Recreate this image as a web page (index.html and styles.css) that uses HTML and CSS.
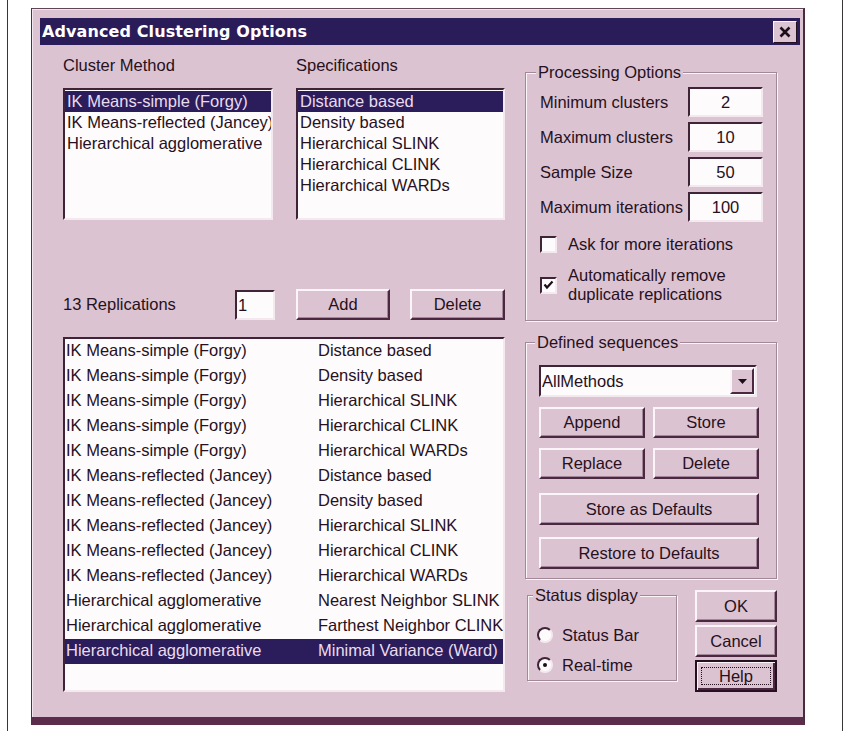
FILE: index.html
```html
<!DOCTYPE html>
<html lang="en">
<head>
<meta charset="utf-8">
<title>Advanced Clustering Options</title>
<link rel="stylesheet" href="styles.css">
</head>
<body>
<div class="page">
  <div class="dialog">
    <div class="titlebar">
      <span class="title">Advanced Clustering Options</span>
      <span class="close" aria-label="Close">
        <svg width="14" height="12" viewBox="0 0 14 12"><path d="M2.5 1.5 L11.5 10.5 M11.5 1.5 L2.5 10.5" stroke="#1c0f19" stroke-width="2.6" fill="none"/></svg>
      </span>
    </div>

    <div class="content">
      <!-- left side: method pickers and the replication list -->
      <div class="left">
        <div class="pickers">
          <div class="picker">
            <div class="label">Cluster Method</div>
            <ul class="list short">
              <li class="sel">IK Means-simple (Forgy)</li>
              <li>IK Means-reflected (Jancey)</li>
              <li>Hierarchical agglomerative</li>
            </ul>
          </div>
          <div class="picker">
            <div class="label">Specifications</div>
            <ul class="list short">
              <li class="sel">Distance based</li>
              <li>Density based</li>
              <li>Hierarchical SLINK</li>
              <li>Hierarchical CLINK</li>
              <li>Hierarchical WARDs</li>
            </ul>
          </div>
        </div>

        <div class="reprow">
          <span class="replabel">13 Replications</span>
          <span class="edit repcount">1</span>
          <button class="btn add">Add</button>
          <button class="btn del">Delete</button>
        </div>

        <ul class="list long">
          <li><span>IK Means-simple (Forgy)</span><span>Distance based</span></li>
          <li><span>IK Means-simple (Forgy)</span><span>Density based</span></li>
          <li><span>IK Means-simple (Forgy)</span><span>Hierarchical SLINK</span></li>
          <li><span>IK Means-simple (Forgy)</span><span>Hierarchical CLINK</span></li>
          <li><span>IK Means-simple (Forgy)</span><span>Hierarchical WARDs</span></li>
          <li><span>IK Means-reflected (Jancey)</span><span>Distance based</span></li>
          <li><span>IK Means-reflected (Jancey)</span><span>Density based</span></li>
          <li><span>IK Means-reflected (Jancey)</span><span>Hierarchical SLINK</span></li>
          <li><span>IK Means-reflected (Jancey)</span><span>Hierarchical CLINK</span></li>
          <li><span>IK Means-reflected (Jancey)</span><span>Hierarchical WARDs</span></li>
          <li><span>Hierarchical agglomerative</span><span>Nearest Neighbor SLINK</span></li>
          <li><span>Hierarchical agglomerative</span><span>Farthest Neighbor CLINK</span></li>
          <li class="sel"><span>Hierarchical agglomerative</span><span>Minimal Variance (Ward)</span></li>
        </ul>
      </div>

      <!-- right side: option groups and dialog buttons -->
      <div class="right">
        <div class="group processing">
          <span class="group-title">Processing Options</span>
          <div class="field"><span>Minimum clusters</span><span class="edit num">2</span></div>
          <div class="field"><span>Maximum clusters</span><span class="edit num">10</span></div>
          <div class="field"><span>Sample Size</span><span class="edit num">50</span></div>
          <div class="field"><span>Maximum iterations</span><span class="edit num">100</span></div>
          <div class="check one">
            <span class="box"></span>
            <span>Ask for more iterations</span>
          </div>
          <div class="check two">
            <span class="box"><svg width="11" height="10" viewBox="0 0 11 10"><path d="M1.5 4.5 L4 7.5 L9.5 1.5" stroke="#1c0f19" stroke-width="2.2" fill="none"/></svg></span>
            <span>Automatically remove<br>duplicate replications</span>
          </div>
        </div>

        <div class="group sequences">
          <span class="group-title">Defined sequences</span>
          <div class="combo">
            <span class="combo-text">AllMethods</span>
            <span class="drop"><svg width="9" height="5" viewBox="0 0 9 5"><path d="M0 0 H9 L4.5 5 Z" fill="#1c0f19"/></svg></span>
          </div>
          <div class="pair">
            <button class="btn">Append</button>
            <button class="btn">Store</button>
          </div>
          <div class="pair">
            <button class="btn">Replace</button>
            <button class="btn">Delete</button>
          </div>
          <button class="btn wide first">Store as Defaults</button>
          <button class="btn wide">Restore to Defaults</button>
        </div>

        <div class="bottom">
          <div class="group status">
            <span class="group-title">Status display</span>
            <div class="radio-row"><span class="radio"></span><span>Status Bar</span></div>
            <div class="radio-row second"><span class="radio"><span class="dot"></span></span><span>Real-time</span></div>
          </div>
          <div class="actions">
            <button class="btn">OK</button>
            <button class="btn">Cancel</button>
            <button class="btn default"><span class="focus">Help</span></button>
          </div>
        </div>
      </div>
    </div>
  </div>
</div>
</body>
</html>
```

FILE: styles.css
```css
html, body {
  margin: 0;
  padding: 0;
}

body {
  width: 852px;
  height: 731px;
  overflow: hidden;
  background: #ffffff;
  font-family: "Liberation Sans", Arial, sans-serif;
  font-size: 16.5px;
  color: #271020;
}

/* printed page margins */
.page {
  margin-left: 7px;
  width: 836px;
  height: 731px;
  box-sizing: border-box;
  border-left: 1px solid #3a3537;
  border-right: 1px solid #3a3537;
  padding: 8px 0 0 23px;
}

/* window frame */
.dialog {
  width: 774px;
  height: 717px;
  box-sizing: border-box;
  background: #dcc3d2;
  border-top: 1px solid #5e4656;
  border-left: 1px solid #4a3343;
  border-right: 2px solid #4a2a40;
  border-bottom: 8px solid #5b2d4b;
  box-shadow: inset 1px 1px 0 #f3e6ee;
  padding: 9px 3px 0 8px;
}

.titlebar {
  height: 27px;
  background: #2a1b59;
  display: flex;
  align-items: center;
  justify-content: space-between;
  padding: 0 3px 0 2px;
}

.title {
  color: #ffffff;
  font-family: "DejaVu Sans", Verdana, sans-serif;
  font-weight: bold;
  font-size: 16px;
  letter-spacing: 0.1px;
}

.close {
  width: 24px;
  height: 22px;
  box-sizing: border-box;
  background: #dcc3d2;
  border: 1px solid;
  border-color: #fbf4f8 #24101e #24101e #fbf4f8;
  display: flex;
  align-items: center;
  justify-content: center;
}

.content {
  display: flex;
  justify-content: space-between;
  padding: 0 23px;
}

/* ---------- left side ---------- */
.left {
  width: 442px;
}

.pickers {
  display: grid;
  grid-template-columns: 210px 209px;
  column-gap: 23px;
  margin-top: 10px;
}

.label {
  height: 20px;
  line-height: 20px;
  margin-bottom: 13px;
}

/* sunken white list boxes */
.list {
  list-style: none;
  margin: 0;
  box-sizing: border-box;
  background: #fefbfd;
  border: 2px solid;
  border-color: #3f2336 #f4e9ef #f4e9ef #3f2336;
  overflow: hidden;
  white-space: nowrap;
}

.list.short {
  height: 132px;
  padding: 1px 0 0 0;
}

.list.short li {
  height: 21px;
  line-height: 20px;
  padding-left: 2px;
}

.list .sel {
  background: #2b1d5b;
  color: #eadcec;
}

.reprow {
  display: flex;
  align-items: center;
  height: 31px;
  margin-top: 69px;
}

.replabel {
  flex: 0 0 172px;
}

.edit {
  box-sizing: border-box;
  background: #fefbfd;
  border: 2px solid;
  border-color: #3f2336 #f4e9ef #f4e9ef #3f2336;
}

.repcount {
  width: 40px;
  height: 30px;
  line-height: 26px;
  padding-left: 1px;
  margin-right: 21px;
}

.btn {
  box-sizing: border-box;
  margin: 0;
  padding: 0;
  background: #dcc3d2;
  font: inherit;
  color: inherit;
  border: 2px solid;
  border-color: #fbf4f8 #4b2740 #4b2740 #fbf4f8;
  box-shadow: inset -1px -1px 0 #a2869a;
  display: flex;
  align-items: center;
  justify-content: center;
}

.reprow .btn {
  height: 31px;
}

.reprow .add {
  width: 94px;
}

.reprow .del {
  width: 95px;
  margin-left: auto;
}

.list.long {
  height: 355px;
  margin-top: 17px;
  padding: 0;
}

.list.long li {
  display: grid;
  grid-template-columns: 252px 1fr;
  height: 25px;
  line-height: 23px;
  padding-left: 1px;
}

/* ---------- right side ---------- */
.right {
  width: 252px;
}

/* etched group frames */
.group {
  box-sizing: border-box;
  border: 1px solid #a38898;
  box-shadow: inset 1px 1px 0 #fbf5f8, 1px 1px 0 #fbf5f8;
}

.group-title {
  display: table;
  line-height: 20px;
  height: 20px;
  margin-top: -11px;
  margin-left: -4px;
  padding: 0 2px;
  background: #dcc3d2;
}

.processing {
  margin-top: 27px;
  padding: 0 13px 16px 14px;
}

.field {
  display: flex;
  justify-content: space-between;
  align-items: center;
  height: 30px;
  margin-top: 5px;
}

.num {
  width: 75px;
  height: 30px;
  line-height: 26px;
  text-align: center;
}

.check {
  display: flex;
  align-items: center;
  gap: 11px;
}

.check.one {
  height: 22px;
  margin-top: 11px;
}

.check.two {
  line-height: 19px;
  margin-top: 11px;
}

.box {
  flex: 0 0 auto;
  width: 17px;
  height: 17px;
  box-sizing: border-box;
  background: #fefbfd;
  border: 2px solid;
  border-color: #3f2336 #f4e9ef #f4e9ef #3f2336;
  display: flex;
  align-items: center;
  justify-content: center;
}

.sequences {
  margin-top: 21px;
  padding: 0 12px 9px 13px;
}

.combo {
  display: flex;
  align-items: center;
  justify-content: space-between;
  width: 218px;
  height: 32px;
  margin-top: 13px;
  box-sizing: border-box;
  background: #fefbfd;
  border: 2px solid;
  border-color: #3f2336 #f4e9ef #f4e9ef #3f2336;
  padding: 0 1px 0 1px;
}

.drop {
  width: 24px;
  height: 26px;
  box-sizing: border-box;
  background: #dcc3d2;
  border: 2px solid;
  border-color: #fbf4f8 #4b2740 #4b2740 #fbf4f8;
  display: flex;
  align-items: center;
  justify-content: center;
}

.pair {
  display: flex;
  gap: 8px;
  margin-top: 10px;
}

.pair .btn {
  width: 106px;
  height: 31px;
}

.btn.wide {
  width: 220px;
  height: 32px;
  margin-top: 12px;
}

.btn.wide.first {
  margin-top: 14px;
}

.bottom {
  display: flex;
  align-items: flex-start;
  justify-content: space-between;
  margin-top: 11px;
}

.status {
  width: 150px;
  margin: 5px 0 0 2px;
  padding: 0 0 4px 9px;
}

.radio-row {
  display: flex;
  align-items: center;
  gap: 9px;
  height: 22px;
  margin-top: 19px;
}

.radio-row.second {
  margin-top: 8px;
}

.radio {
  width: 16px;
  height: 16px;
  box-sizing: border-box;
  border-radius: 50%;
  background: #fefbfd;
  border: 2px solid;
  border-color: #3f2336 #f4e9ef #f4e9ef #3f2336;
  display: flex;
  align-items: center;
  justify-content: center;
}

.dot {
  width: 4px;
  height: 4px;
  border-radius: 50%;
  background: #1c0f19;
}

.actions {
  display: flex;
  flex-direction: column;
  gap: 3px;
  width: 82px;
}

.actions .btn {
  height: 32px;
}

.btn.default {
  border-color: #24101e;
  box-shadow: inset 1px 1px 0 #fbf4f8, inset -2px -2px 0 #4b2740;
}

.focus {
  box-sizing: border-box;
  width: 70px;
  height: 18px;
  line-height: 16px;
  text-align: center;
  border: 1px dotted #24101e;
}
```
